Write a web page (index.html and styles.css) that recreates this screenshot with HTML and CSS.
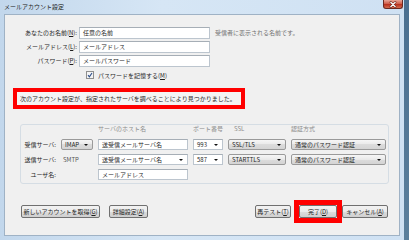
FILE: index.html
```html
<!DOCTYPE html>
<html lang="ja">
<head>
  <meta charset="UTF-8" />
  <title>メールアカウント設定</title>
  <link rel="stylesheet" href="styles.css">
</head>
<body>

  <div class="window">
    <div class="titlebar">
      <span class="title">メールアカウント設定</span>
      <span class="close">
        <svg width="20" height="9" viewBox="0 0 20 9">
          <path d="M7.5 2 L12.5 7 M12.5 2 L7.5 7" stroke="#5a1a12" stroke-width="2.6" stroke-linecap="round"/>
          <path d="M7.5 2 L12.5 7 M12.5 2 L7.5 7" stroke="#fff" stroke-width="1.3" stroke-linecap="round"/>
        </svg>
      </span>
    </div>

    <div class="client">
      <div class="identity">
        <label>あなたのお名前(<u>N</u>):</label>
        <div class="field">任意の名前</div>
        <span class="hint">受信者に表示される名前です。</span>

        <label>メールアドレス(<u>L</u>):</label>
        <div class="field">メールアドレス</div>
        <span></span>

        <label>パスワード(<u>P</u>):</label>
        <div class="field">メールパスワード</div>
        <span></span>

        <span></span>
        <div class="remember">
          <svg width="8" height="8" viewBox="0 0 8 8">
            <rect x="0.5" y="0.5" width="7" height="7" fill="#f4f4f4" stroke="#8f8f8f"/>
            <path d="M2 4.2 L3.4 5.8 L6 2" fill="none" stroke="#2d4e8a" stroke-width="1.1"/>
          </svg>
          <span>パスワードを記憶する(<u>M</u>)</span>
        </div>
      </div>

      <div class="notice">次のアカウント設定が、指定されたサーバを調べることにより見つかりました。</div>

      <div class="servers">
        <span></span>
        <span></span>
        <span class="col-head">サーバのホスト名</span>
        <span class="col-head">ポート番号</span>
        <span class="col-head ssl-head">SSL</span>
        <span class="col-head">認証方式</span>

        <label>受信サーバ:</label>
        <div class="dropdown">IMAP</div>
        <div class="field">送受信メールサーバ名</div>
        <div class="field combo">993</div>
        <div class="dropdown">SSL/TLS</div>
        <div class="dropdown">通常のパスワード認証</div>

        <label>送信サーバ:</label>
        <span class="fixed">SMTP</span>
        <div class="field combo">送受信メールサーバ名</div>
        <div class="field combo">587</div>
        <div class="dropdown">STARTTLS</div>
        <div class="dropdown">通常のパスワード認証</div>

        <label>ユーザ名:</label>
        <span></span>
        <div class="field">メールアドレス</div>
      </div>

      <div class="actions">
        <div class="button-group">
          <button class="btn btn-new">新しいアカウントを取得(<u>G</u>)</button>
          <button class="btn btn-advanced">詳細設定(<u>A</u>)</button>
        </div>
        <div class="button-group">
          <button class="btn btn-retest">再テスト(<u>T</u>)</button>
          <div class="highlight">
            <button class="btn btn-done">完了(<u>D</u>)</button>
          </div>
          <button class="btn btn-cancel">キャンセル(<u>A</u>)</button>
        </div>
      </div>
    </div>
  </div>

</body>
</html>
```

FILE: styles.css
```css
:root {
  --frame-blue: #c6dbef;
  --client-grey: #f0f0f0;
  --mark-red: #ff0000;
  --text-dark: #1e1e1e;
  --text-muted: #8c8c8c;
}

body {
  margin: 0;
  background: linear-gradient(#4a6f90, #5b7f9c);
  font-family: "Noto Sans CJK JP", "Noto Sans", sans-serif;
  font-size: 6px;
  color: var(--text-dark);
}

u {
  text-decoration: underline;
  text-underline-offset: 1px;
}

.window {
  width: 404px;
  height: 240px;
  display: flex;
  flex-direction: column;
  background: linear-gradient(90deg, #c2d7ec, #d6e6f5 40%, #cfe1f3);
}

.titlebar {
  height: 14px;
  display: flex;
  align-items: flex-start;
  padding-left: 4px;
}

.title {
  line-height: 13px;
  color: #222;
}

.close {
  margin-left: auto;
  margin-right: 1px;
  width: 20px;
  height: 9px;
  border: 1px solid #6b2a22;
  border-top: none;
  border-radius: 0 0 3px 3px;
  background: linear-gradient(#e8a597, #d0604d 45%, #b8321f 55%, #d46a4c);
  display: flex;
  box-sizing: border-box;
}

.client {
  flex: 1;
  margin: 0 4px 4px 4px;
  background: var(--client-grey);
  border: 1px solid #9fb2c5;
  box-sizing: border-box;
}

/* name / address / password */
.identity {
  display: grid;
  grid-template-columns: 72px 131px auto;
  grid-template-rows: 12px 12px 12px 12px;
  column-gap: 2px;
  row-gap: 2px;
  margin-top: 12px;
}

.identity label {
  text-align: right;
  line-height: 12px;
  white-space: nowrap;
}

.field {
  background: #fff;
  border: 1px solid #bcc5ce;
  border-top-color: #a6aeb6;
  box-sizing: border-box;
  padding-left: 3px;
  line-height: 10px;
  white-space: nowrap;
  overflow: hidden;
  position: relative;
}

.hint {
  margin-left: 3px;
  line-height: 12px;
  color: #707070;
  white-space: nowrap;
}

.remember {
  display: flex;
  align-items: center;
  gap: 4px;
  padding-left: 7px;
  white-space: nowrap;
}

.notice {
  width: 232px;
  height: 21px;
  box-sizing: border-box;
  margin: 7px 0 0 8px;
  border: 4px solid var(--mark-red);
  padding-left: 3px;
  line-height: 13px;
  white-space: nowrap;
  background: #f4f4f4;
}

/* server settings */
.servers {
  width: 369px;
  height: 60px;
  box-sizing: border-box;
  margin: 15px 0 0 15px;
  border: 1px solid #d5dde4;
  border-radius: 3px;
  display: grid;
  grid-template-columns: 35px 32px 90px 30px 58px 95px;
  grid-template-rows: 10px 11px 11px 11px;
  column-gap: 5px;
  row-gap: 4px;
}

.servers label {
  text-align: right;
  line-height: 11px;
  white-space: nowrap;
}

.col-head {
  color: var(--text-muted);
  line-height: 7px;
  white-space: nowrap;
}

.ssl-head {
  padding-left: 6px;
}

.fixed {
  line-height: 11px;
  padding-left: 2px;
  color: #555;
}

.dropdown {
  border: 1px solid #9a9a9a;
  border-radius: 2px;
  background: linear-gradient(#f6f6f6, #e9e9e9 50%, #dcdcdc 50%, #d4d4d4);
  box-sizing: border-box;
  padding-left: 3px;
  line-height: 9px;
  white-space: nowrap;
  overflow: hidden;
  position: relative;
}

.dropdown::after,
.combo::after {
  content: "";
  position: absolute;
  right: 4px;
  top: 4px;
  border-left: 2px solid transparent;
  border-right: 2px solid transparent;
  border-top: 2px solid #111;
}

.field.combo::after {
  top: 4px;
}

/* bottom buttons */
.actions {
  height: 23px;
  margin-top: 16px;
  padding: 0 11px 0 16px;
  display: flex;
  justify-content: space-between;
  align-items: center;
}

.button-group {
  display: flex;
  align-items: center;
}

.btn {
  height: 13px;
  padding: 0;
  border: 1px solid #707070;
  border-radius: 2px;
  background: linear-gradient(#f2f2f2, #ebebeb 50%, #dddddd 50%, #cfcfcf);
  font-family: inherit;
  font-size: 6px;
  line-height: 11px;
  color: var(--text-dark);
  text-align: center;
  white-space: nowrap;
}

.btn-new { width: 79px; }
.btn-advanced { width: 39px; margin-left: 9px; }
.btn-retest { width: 36px; margin-right: 3px; }
.btn-done { width: 38px; display: block; }
.btn-cancel { width: 46px; }

.highlight {
  border: 5px solid var(--mark-red);
}
```
